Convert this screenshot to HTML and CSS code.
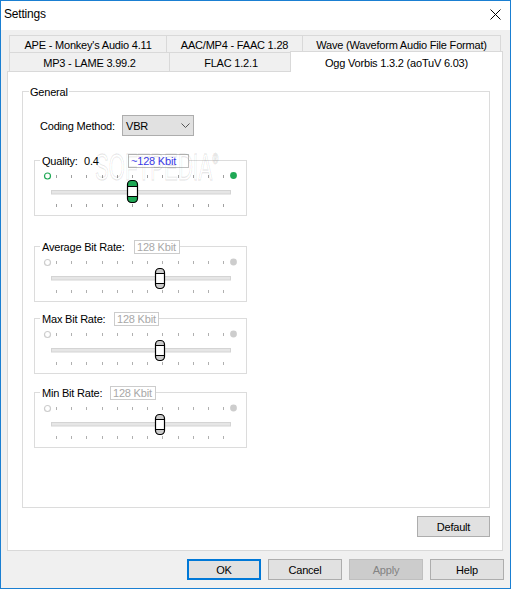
FILE: index.html
```html
<!DOCTYPE html>
<html>
<head>
<meta charset="utf-8">
<title>Settings</title>
<link rel="stylesheet" href="styles.css">
</head>
<body>
<div class="window">
  <div class="titlebar">
    <span class="title">Settings</span>
    <svg class="close" width="11" height="11" viewBox="0 0 11 11"><path d="M0.5 0.5L10.5 10.5M10.5 0.5L0.5 10.5" stroke="#000" stroke-width="1"/></svg>
  </div>
  <div class="tabs">
    <div class="tabrow row1">
      <div class="tab t-ape">APE - Monkey's Audio 4.11</div>
      <div class="tab t-aac">AAC/MP4 - FAAC 1.28</div>
      <div class="tab t-wave">Wave (Waveform Audio File Format)</div>
    </div>
    <div class="tabrow row2">
      <div class="tab t-mp3">MP3 - LAME 3.99.2</div>
      <div class="tab t-flac">FLAC 1.2.1</div>
      <div class="tab t-ogg sel">Ogg Vorbis 1.3.2 (aoTuV 6.03)</div>
    </div>
  </div>
  <div class="page">
    <div class="gb general">
      <div class="gb-head"><span class="legend">General</span></div>
      <div class="watermark">SOFTPEDIA<sup>®</sup></div>
      <div class="coding">
        <span class="coding-lbl">Coding Method:</span>
        <div class="combo"><span>VBR</span><svg width="9" height="5" viewBox="0 0 9 5"><path d="M0.5 0.5L4.5 4.5L8.5 0.5" fill="none" stroke="#555" stroke-width="1"/></svg></div>
      </div>

      <div class="gb slider-box q">
        <div class="gb-head">
          <span class="lbl w-q"><span class="qname">Quality:</span>0.4</span>
          <span class="val on w-vq">~128 Kbit</span>
        </div>
        <svg class="slider" width="211" height="47" viewBox="0 0 211 47">
          <path d="M21.5 7v3M36.5 7v3M51.5 7v3M67.5 7v3M82.5 7v3M97.5 7v3M112.5 7v3M127.5 7v3M143.5 7v3M158.5 7v3M173.5 7v3M188.5 7v3M21.5 36v3M36.5 36v3M51.5 36v3M67.5 36v3M82.5 36v3M97.5 36v3M112.5 36v3M127.5 36v3M143.5 36v3M158.5 36v3M173.5 36v3M188.5 36v3" stroke="#a0a0a0" stroke-width="1"/>
          <circle cx="12.5" cy="8" r="3" fill="#fff" stroke="#1fa855" stroke-width="1.2"/>
          <circle cx="198.5" cy="7.5" r="3.4" fill="#1fa855"/>
          <rect x="16.5" y="22.5" width="179" height="3.5" fill="#e6e6e6" stroke="#d4d4d4" stroke-width="1"/>
          <rect x="92.5" y="12.5" width="10" height="22" rx="4" fill="#1fa855"/>
          <rect x="92.5" y="18.5" width="10" height="10" fill="#fff"/>
          <rect x="92.5" y="12.5" width="10" height="22" rx="4" fill="none" stroke="#000" stroke-width="1.2"/>
          <path d="M92.5 18.5h10M92.5 28.5h10" stroke="#000" stroke-width="1"/>
        </svg>
      </div>

      <div class="gb slider-box avg">
        <div class="gb-head">
          <span class="lbl w-avg">Average Bit Rate:</span>
          <span class="val off w-vavg">128 Kbit</span>
        </div>
        <svg class="slider" width="211" height="47" viewBox="0 0 211 47">
          <path d="M21.5 7v3M36.5 7v3M51.5 7v3M67.5 7v3M82.5 7v3M97.5 7v3M112.5 7v3M127.5 7v3M143.5 7v3M158.5 7v3M173.5 7v3M188.5 7v3M21.5 36v3M36.5 36v3M51.5 36v3M67.5 36v3M82.5 36v3M97.5 36v3M112.5 36v3M127.5 36v3M143.5 36v3M158.5 36v3M173.5 36v3M188.5 36v3" stroke="#b0b0b0" stroke-width="1"/>
          <circle cx="12.5" cy="8.5" r="3" fill="#fff" stroke="#cdcdcd" stroke-width="1.2"/>
          <circle cx="198.5" cy="8" r="3.4" fill="#cdcdcd"/>
          <rect x="16.5" y="22.5" width="179" height="3.5" fill="#e6e6e6" stroke="#d4d4d4" stroke-width="1"/>
          <rect x="120.5" y="14.5" width="9" height="20" rx="4" fill="#cccccc"/>
          <rect x="120.5" y="19.5" width="9" height="10" fill="#fff"/>
          <rect x="120.5" y="14.5" width="9" height="20" rx="4" fill="none" stroke="#000" stroke-width="1.2"/>
          <path d="M120.5 19.5h9M120.5 29.5h9" stroke="#000" stroke-width="1"/>
        </svg>
      </div>

      <div class="gb slider-box max">
        <div class="gb-head">
          <span class="lbl w-max">Max Bit Rate:</span>
          <span class="val off w-vmax">128 Kbit</span>
        </div>
        <svg class="slider" width="211" height="47" viewBox="0 0 211 47">
          <path d="M21.5 7v3M36.5 7v3M51.5 7v3M67.5 7v3M82.5 7v3M97.5 7v3M112.5 7v3M127.5 7v3M143.5 7v3M158.5 7v3M173.5 7v3M188.5 7v3M21.5 36v3M36.5 36v3M51.5 36v3M67.5 36v3M82.5 36v3M97.5 36v3M112.5 36v3M127.5 36v3M143.5 36v3M158.5 36v3M173.5 36v3M188.5 36v3" stroke="#b0b0b0" stroke-width="1"/>
          <circle cx="12.5" cy="8.5" r="3" fill="#fff" stroke="#cdcdcd" stroke-width="1.2"/>
          <circle cx="198.5" cy="8" r="3.4" fill="#cdcdcd"/>
          <rect x="16.5" y="22.5" width="179" height="3.5" fill="#e6e6e6" stroke="#d4d4d4" stroke-width="1"/>
          <rect x="120.5" y="14.5" width="9" height="20" rx="4" fill="#cccccc"/>
          <rect x="120.5" y="19.5" width="9" height="10" fill="#fff"/>
          <rect x="120.5" y="14.5" width="9" height="20" rx="4" fill="none" stroke="#000" stroke-width="1.2"/>
          <path d="M120.5 19.5h9M120.5 29.5h9" stroke="#000" stroke-width="1"/>
        </svg>
      </div>

      <div class="gb slider-box min">
        <div class="gb-head">
          <span class="lbl w-min">Min Bit Rate:</span>
          <span class="val off w-vmin">128 Kbit</span>
        </div>
        <svg class="slider" width="211" height="47" viewBox="0 0 211 47">
          <path d="M21.5 7v3M36.5 7v3M51.5 7v3M67.5 7v3M82.5 7v3M97.5 7v3M112.5 7v3M127.5 7v3M143.5 7v3M158.5 7v3M173.5 7v3M188.5 7v3M21.5 36v3M36.5 36v3M51.5 36v3M67.5 36v3M82.5 36v3M97.5 36v3M112.5 36v3M127.5 36v3M143.5 36v3M158.5 36v3M173.5 36v3M188.5 36v3" stroke="#b0b0b0" stroke-width="1"/>
          <circle cx="12.5" cy="8.5" r="3" fill="#fff" stroke="#cdcdcd" stroke-width="1.2"/>
          <circle cx="198.5" cy="8" r="3.4" fill="#cdcdcd"/>
          <rect x="16.5" y="22.5" width="179" height="3.5" fill="#e6e6e6" stroke="#d4d4d4" stroke-width="1"/>
          <rect x="120.5" y="14.5" width="9" height="20" rx="4" fill="#cccccc"/>
          <rect x="120.5" y="19.5" width="9" height="10" fill="#fff"/>
          <rect x="120.5" y="14.5" width="9" height="20" rx="4" fill="none" stroke="#000" stroke-width="1.2"/>
          <path d="M120.5 19.5h9M120.5 29.5h9" stroke="#000" stroke-width="1"/>
        </svg>
      </div>
    </div>
    <button class="btn btn-default">Default</button>
  </div>
  <div class="footer">
    <button class="btn btn-ok">OK</button>
    <button class="btn">Cancel</button>
    <button class="btn btn-disabled">Apply</button>
    <button class="btn">Help</button>
  </div>
</div>
</body>
</html>
```

FILE: styles.css
```css
body {
  margin: 0;
  font-family: "Liberation Sans", Arial, sans-serif;
  font-size: 11px;
  letter-spacing: -0.2px;
  color: #000;
  background: #fff;
}

.window {
  width: 511px;
  height: 589px;
  box-sizing: border-box;
  border: 1px solid #1a7fd2;
  background: #f0f0f0;
  display: flex;
  flex-direction: column;
}

.titlebar {
  height: 29px;
  flex: none;
  box-sizing: border-box;
  background: #fff;
  display: flex;
  align-items: center;
  justify-content: space-between;
  padding: 0 9px 3px 3px;
}

.title {
  font-size: 12px;
}

.close {
  display: block;
}

/* Tabs */
.tabs {
  padding: 5px 0 0 8px;
  flex: none;
}

.tabrow {
  display: flex;
}

.tab {
  box-sizing: border-box;
  border: 1px solid #d9d9d9;
  border-bottom: 0;
  background: #f0f0f0;
  display: flex;
  align-items: center;
  justify-content: center;
  white-space: nowrap;
  padding-top: 1px;
}

.tab + .tab {
  margin-left: -1px;
}

.row1 .tab {
  height: 17px;
}

.row2 .tab {
  height: 19px;
}

.t-ape { width: 158px; }
.t-aac { width: 137px; }
.t-wave { width: 199px; }
.t-mp3 { width: 161px; }
.t-flac { width: 124px; }

.row2 .tab.sel {
  width: 213px;
  height: 21px;
  margin: -1px 0 -1px -3px;
  background: #fff;
  position: relative;
  z-index: 1;
}

/* Page */
.page {
  margin-left: 6px;
  width: 496px;
  height: 480px;
  flex: none;
  box-sizing: border-box;
  border: 1px solid #d9d9d9;
  background: #fff;
  padding: 19px 12px 0 14px;
  display: flex;
  flex-direction: column;
}

.gb {
  border: 1px solid #dcdcdc;
  box-sizing: border-box;
}

.gb-head {
  height: 14px;
  margin-top: -7px;
  display: flex;
  align-items: center;
}

.general {
  width: 468px;
  height: 417px;
  position: relative;
  flex: none;
}

.general > .gb-head {
  margin-left: 6px;
}

.legend {
  background: #fff;
  padding: 0 1px;
  line-height: 14px;
}

.watermark {
  position: absolute;
  left: 72px;
  top: 49px;
  font-size: 37px;
  line-height: 37px;
  letter-spacing: 0;
  color: rgba(0, 0, 0, 0.02);
  -webkit-text-stroke: 1.4px rgba(0, 0, 0, 0.09);
  transform: scaleX(0.56);
  transform-origin: 0 0;
  white-space: nowrap;
  pointer-events: none;
}

.watermark sup {
  font-size: 14px;
  vertical-align: 16px;
}

.coding {
  display: flex;
  align-items: center;
  height: 21px;
  margin: 16px 0 0 17px;
}

.coding-lbl {
  width: 82px;
}

.combo {
  width: 72px;
  height: 21px;
  box-sizing: border-box;
  border: 1px solid #adadad;
  background: #e1e1e1;
  display: flex;
  align-items: center;
  justify-content: space-between;
  padding: 0 3px;
}

.combo svg {
  display: block;
}

/* Slider group boxes */
.slider-box {
  width: 213px;
  height: 56px;
  margin-left: 11px;
  flex: none;
}

.slider-box.q { margin-top: 24px; }
.slider-box.avg { margin-top: 30px; }
.slider-box.max { margin-top: 16px; }
.slider-box.min { margin-top: 18px; }

.slider-box .gb-head {
  margin-left: 5px;
}

.lbl {
  box-sizing: border-box;
  height: 14px;
  line-height: 14px;
  padding: 0 2px;
  background: #fff;
  white-space: nowrap;
}

.qname {
  display: inline-block;
  width: 42px;
}

.w-q { width: 88px; }
.w-avg { width: 94px; }
.w-max { width: 74px; }
.w-min { width: 70px; }

.val {
  box-sizing: border-box;
  height: 14px;
  line-height: 12px;
  padding: 0 2px;
  background: #fff;
  white-space: nowrap;
}

.val.on {
  border: 1px solid #bdbdbd;
  color: #3a3ae8;
}

.val.off {
  border: 1px solid #cccccc;
  color: #a8a8a8;
}

.w-vq { width: 61px; }
.w-vavg { width: 46px; }
.w-vmax { width: 45px; }
.w-vmin { width: 46px; }

.slider {
  display: block;
}

/* Buttons */
.btn {
  box-sizing: border-box;
  width: 74px;
  height: 21px;
  border: 1px solid #adadad;
  background: #e1e1e1;
  font-family: inherit;
  font-size: 11px;
  letter-spacing: -0.2px;
  color: #000;
  padding: 0;
  margin: 0;
}

.btn-default {
  width: 73px;
  align-self: flex-end;
  margin-top: 8px;
}

.btn-ok {
  border: 2px solid #0078d7;
}

.btn-disabled {
  background: #cccccc;
  border-color: #bfbfbf;
  color: #838383;
}

.footer {
  display: flex;
  justify-content: flex-end;
  gap: 7px;
  margin-top: 8px;
  padding-right: 6px;
}
```
